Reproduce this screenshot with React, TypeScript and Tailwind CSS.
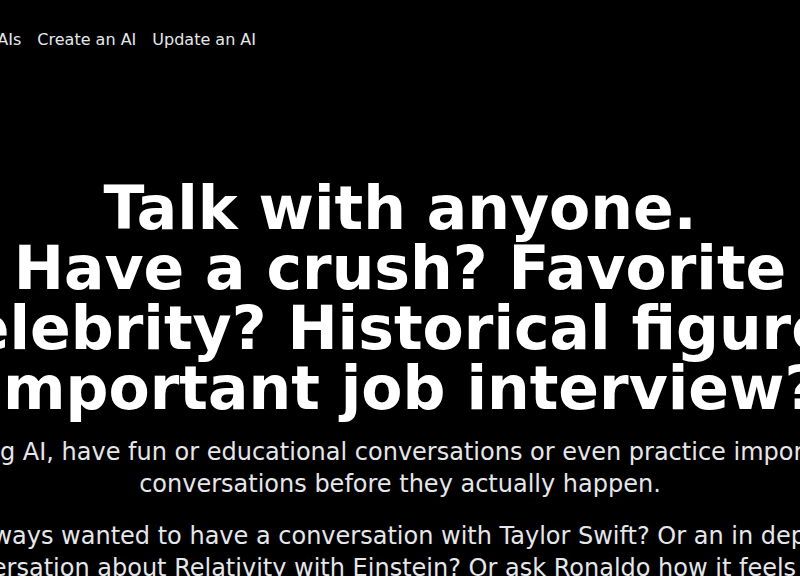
export default function App() {
  return (
    <div className="min-h-screen bg-black flex flex-col items-center overflow-hidden" style={{ fontFamily: '"DejaVu Sans", sans-serif' }}>
      <div className="w-[1024px] shrink-0">
        {/* Top nav */}
        <nav className="h-20 flex items-center gap-4 pl-[46px] text-base text-gray-200">
          <a href="#">Browse AIs</a>
          <a href="#">Create an AI</a>
          <a href="#">Update an AI</a>
        </nav>

        {/* Hero */}
        <section className="mt-[98px] text-center">
          <h1 className="text-6xl leading-none font-bold text-white">
            Talk with anyone.
            <br />
            Have a crush? Favorite celebrity? Historical figure? Important job interview?
          </h1>
          <p className="mt-[18px] text-2xl text-gray-200">
            Using AI, have fun or educational conversations or even practice important conversations before they actually happen.
          </p>
          <p className="mt-5 text-2xl text-gray-200">
            Always wanted to have a conversation with Taylor Swift? Or an in depth conversation about Relativity with Einstein? Or ask Ronaldo how it feels to be considered the GOAT?
          </p>
        </section>
      </div>
    </div>
  );
}
